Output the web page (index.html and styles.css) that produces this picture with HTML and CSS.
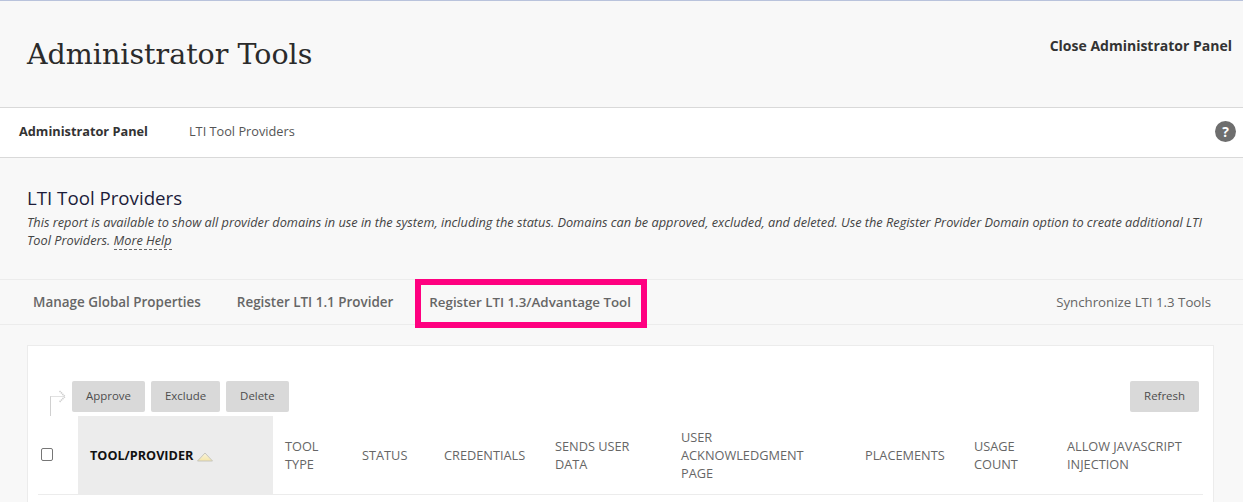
FILE: index.html
```html
<!DOCTYPE html>
<html lang="en">
<head>
<meta charset="utf-8">
<title>Administrator Tools</title>
<link rel="stylesheet" href="styles.css">
</head>
<body>
<header class="page-head">
  <h1 class="page-title">Administrator Tools</h1>
  <a class="close-link" href="#">Close Administrator Panel</a>
</header>
<nav class="crumbs">
  <a class="crumb crumb-root" href="#">Administrator Panel</a>
  <a class="crumb" href="#">LTI Tool Providers</a>
  <span class="help-icon">?</span>
</nav>
<section class="intro">
  <h2 class="intro-title">LTI Tool Providers</h2>
  <p class="intro-text">This report is available to show all provider domains in use in the system, including the status. Domains can be approved, excluded, and deleted. Use the Register Provider Domain option to create additional LTI Tool Providers. <a class="more-help" href="#">More Help</a></p>
</section>
<div class="action-bar">
  <a class="action" href="#">Manage Global Properties</a>
  <a class="action" href="#">Register LTI 1.1 Provider</a>
  <a class="action action-marked" href="#">Register LTI 1.3/Advantage Tool</a>
  <a class="action action-right" href="#">Synchronize LTI 1.3 Tools</a>
</div>
<main class="card">
  <div class="toolbar">
    <svg class="select-arrow" width="17" height="26" viewBox="0 0 17 26" aria-hidden="true">
      <path d="M1.5 26V6.5" fill="none" stroke="#d0d0d0" stroke-width="1"/>
      <path d="M1.5 6.5H15" fill="none" stroke="#c4c4c4" stroke-width="1" stroke-dasharray="1 1"/>
      <path d="M10.5 1L16 6.5L10.5 12" fill="none" stroke="#d0d0d0" stroke-width="1.6" stroke-dasharray="1.4 0.6"/>
    </svg>
    <button class="btn">Approve</button>
    <button class="btn">Exclude</button>
    <button class="btn">Delete</button>
    <button class="btn btn-right">Refresh</button>
  </div>
  <div class="table-head">
    <div class="cell cell-check"><span class="checkbox"></span></div>
    <div class="cell cell-sorted">TOOL/PROVIDER
      <svg class="sort-icon" width="16" height="10" viewBox="0 0 16 10" aria-hidden="true">
        <defs><linearGradient id="sortFill" x1="0" y1="0" x2="0" y2="1"><stop offset="0" stop-color="#f8f3df"/><stop offset="1" stop-color="#f5e6a8"/></linearGradient></defs>
        <path d="M8 1L15.5 9H0.5Z" fill="url(#sortFill)" stroke="#c6c5bd" stroke-width="1" stroke-linejoin="round"/>
      </svg>
    </div>
    <div class="cell">TOOL<br>TYPE</div>
    <div class="cell">STATUS</div>
    <div class="cell">CREDENTIALS</div>
    <div class="cell">SENDS USER<br>DATA</div>
    <div class="cell">USER<br>ACKNOWLEDGMENT<br>PAGE</div>
    <div class="cell">PLACEMENTS</div>
    <div class="cell">USAGE<br>COUNT</div>
    <div class="cell">ALLOW JAVASCRIPT<br>INJECTION</div>
  </div>
</main>
</body>
</html>
```

FILE: styles.css
```css
*, *::before, *::after { box-sizing: border-box; }
html, body { margin: 0; padding: 0; }
body {
  height: 502px;
  overflow: hidden;
  background: #f8f8f8;
  border-top: 1px solid #b9c3dc;
  font-family: "Open Sans", sans-serif;
  color: #333;
}
a { color: inherit; text-decoration: none; }

.page-head {
  height: 106px;
  padding: 0 11px 0 27px;
  display: flex;
  justify-content: space-between;
  align-items: flex-start;
}
.page-title {
  margin: 31px 0 0;
  font: 400 28.5px/46px "DejaVu Serif", serif;
  color: #2b2b2b;
}
.close-link {
  margin-top: 35px;
  font-size: 14px;
  line-height: 19px;
  font-weight: 700;
  color: #333;
}

.crumbs {
  height: 51px;
  background: #fff;
  border-top: 1px solid #d9d9d9;
  border-bottom: 1px solid #d9d9d9;
  padding: 0 7px 3px 19px;
  display: flex;
  align-items: center;
  gap: 41px;
  font-size: 12.75px;
  color: #555;
}
.crumb-root { font-weight: 700; color: #333; }
.help-icon {
  margin-left: auto;
  width: 21px;
  height: 21px;
  border-radius: 50%;
  background: #6e6e6e;
  color: #fff;
  font-size: 14px;
  font-weight: 700;
  line-height: 21px;
  text-align: center;
}

.intro {
  height: 122px;
  padding: 27px 27px 0;
  border-bottom: 1px solid #ececec;
}
.intro-title {
  margin: 0;
  font-size: 18.7px;
  line-height: 26px;
  font-weight: 400;
  color: #1c1c3a;
}
.intro-text {
  margin: 2px 0 0;
  font-size: 12.75px;
  line-height: 18px;
  font-style: italic;
  color: #444;
}
.more-help { border-bottom: 1px dashed #666; }

.action-bar {
  height: 45px;
  border-bottom: 1px solid #ececec;
  padding: 0 32px 0 15px;
  display: flex;
  align-items: center;
  font-size: 13.45px;
  color: #666;
}
.action {
  padding: 0 18px;
  font-weight: 600;
  line-height: 43px;
}
.action-marked {
  position: relative;
  font-size: 13.32px;
}
.action-marked::after {
  content: "";
  position: absolute;
  left: 4px;
  right: 2px;
  top: -2px;
  height: 49px;
  border: 6px solid #ff0080;
}
.action-right {
  margin-left: auto;
  padding: 0;
  font-weight: 400;
  font-size: 13.25px;
}

.card {
  margin: 20px 29px 0 27px;
  height: 200px;
  background: #fff;
  border: 1px solid #ececec;
  border-bottom: 0;
  padding: 0 10px;
}
.toolbar {
  display: flex;
  align-items: flex-start;
  gap: 6px;
  padding: 35px 4px 0 0;
  height: 70px;
}
.select-arrow { margin: 9px 0 0 11px; width: 17px; height: 26px; flex: none; }
.btn {
  height: 31px;
  padding: 0 14px 2px;
  border: 0;
  border-radius: 2px;
  background: #d9d9d9;
  font: 400 11.45px/29px "Open Sans", sans-serif;
  color: #4d4d4d;
}
.btn-right { margin-left: auto; }

.table-head {
  display: grid;
  grid-template-columns: 40px 195px 77px 82px 111px 126px 184px 109px 93px 1fr;
  height: 79px;
  border-bottom: 1px solid #ececec;
  font-size: 12.75px;
  line-height: 18px;
  color: #666;
}
.cell {
  display: flex;
  flex-direction: column;
  justify-content: center;
  padding: 0 0 2px 12px;
}
.cell-check { padding-left: 3px; }
.checkbox {
  width: 12px;
  height: 13px;
  border: 1px solid #767676;
  border-radius: 2px;
  background: #fff;
}
.cell-sorted {
  display: block;
  padding-bottom: 0;
  line-height: 79px;
  background: #ececec;
  font-size: 12.65px;
  font-weight: 700;
  color: #111;
}
.sort-icon { vertical-align: -2px; }
```
